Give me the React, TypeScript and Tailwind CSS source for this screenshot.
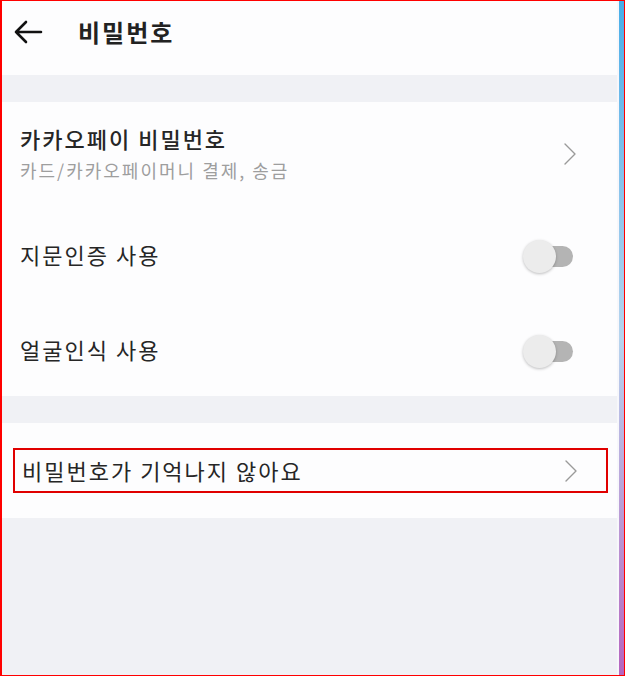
const font = { fontFamily: '"Noto Sans CJK KR", "Noto Sans", sans-serif' };

function Chevron() {
  return (
    <svg width="14" height="24" viewBox="0 0 14 24" fill="none" className="shrink-0">
      <path d="M2 2 L12 12 L2 22" stroke="#9a9a9a" strokeWidth="1.4" strokeLinecap="round" strokeLinejoin="round" />
    </svg>
  );
}

function Toggle() {
  return (
    <div className="relative w-[50px] h-[34px] shrink-0 mt-[6px]">
      <div className="absolute right-0 top-[6px] w-[38px] h-[21px] rounded-full bg-[#b4b4b4]" />
      <div className="absolute left-0 top-0 w-[33px] h-[33px] rounded-full bg-[#ececec] shadow-[0_1px_3px_rgba(0,0,0,0.25)]" />
    </div>
  );
}

export default function App() {
  return (
    <div
      className="w-[625px] h-[676px] flex border-t border-b border-r border-l-2 border-[#ff0000] overflow-hidden"
      style={font}
    >
      <div className="flex-1 flex flex-col bg-[#f0f1f5]">
        {/* Header */}
        <div className="h-[74px] bg-[#fdfdfe] flex items-center pl-[11px] pb-[12px]">
          <svg width="30" height="24" viewBox="0 0 30 24" fill="none">
            <path d="M28 12 H3 M13 2 L3 12 L13 22" stroke="#111" strokeWidth="2.6" strokeLinecap="round" strokeLinejoin="round" />
          </svg>
          <span className="ml-[35px] text-[24px] font-bold tracking-[2px] text-[#222]">비밀번호</span>
        </div>

        <div className="h-[27px]" />

        {/* Settings group */}
        <div className="bg-[#fdfdfe] flex flex-col">
          <div className="h-[104px] flex items-center justify-between pl-[18px] pr-[40px]">
            <div className="flex flex-col -mt-[2px]">
              <span className="text-[22px] font-medium tracking-[2px] text-[#262626] leading-[30px]">카카오페이 비밀번호</span>
              <span className="text-[18px] tracking-[2px] text-[#9e9e9e] leading-[26px] mt-[4px]">카드/카카오페이머니 결제, 송금</span>
            </div>
            <Chevron />
          </div>
          <div className="h-[96px] flex items-center justify-between pl-[18px] pr-[44px]">
            <span className="text-[22px] tracking-[2px] text-[#262626]">지문인증 사용</span>
            <Toggle />
          </div>
          <div className="h-[94px] flex items-center justify-between pl-[18px] pr-[44px]">
            <span className="text-[22px] tracking-[2px] text-[#262626]">얼굴인식 사용</span>
            <Toggle />
          </div>
        </div>

        <div className="h-[27px]" />

        <div className="bg-[#fdfdfe] h-[95px] flex items-center pl-[11px] pr-[9px]">
          <div className="flex-1 h-[45px] border-2 border-[#e00000] flex items-center justify-between pl-[7px] pr-[28px]">
            <span className="text-[22px] tracking-[2px] text-[#262626]">비밀번호가 기억나지 않아요</span>
            <Chevron />
          </div>
        </div>
      </div>

      {/* Right edge strip */}
      <div className="w-[2px] bg-[#f7f7fb]" />
      <div className="w-[5px] bg-gradient-to-b from-[#45aee8] via-[#b6d4ee] to-[#b565bf]" />
    </div>
  );
}
